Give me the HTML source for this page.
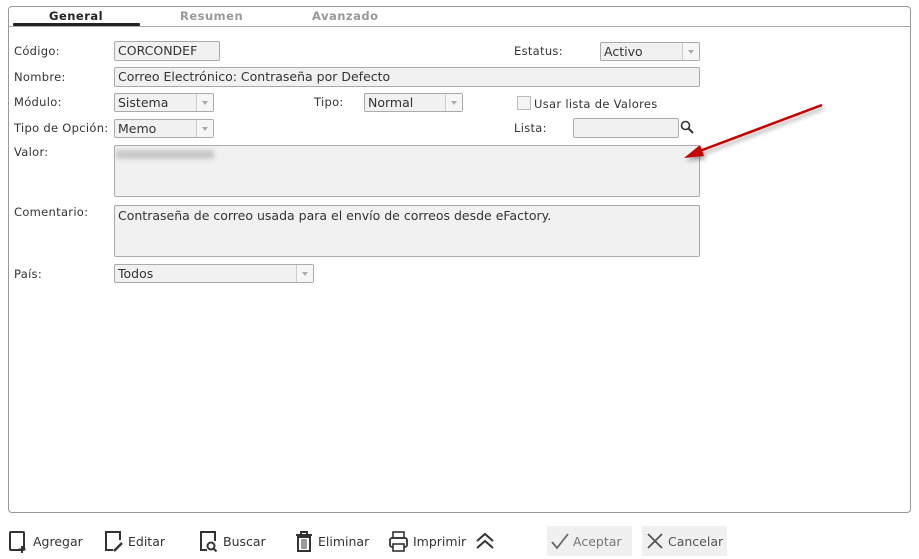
<!DOCTYPE html>
<html><head><meta charset="utf-8"><style>
body{margin:0;width:919px;height:559px;background:#fff;font-family:"DejaVu Sans",Verdana,sans-serif;font-size:12px;color:#333;position:relative;overflow:hidden}
.a{position:absolute}
.panel{left:8px;top:6px;width:903px;height:507px;border:1px solid #999;border-radius:4px;box-sizing:border-box}
.tab{top:9px;font-size:11.5px;font-weight:bold;letter-spacing:.5px;color:#999}
.lbl{font-size:11.5px;color:#333;letter-spacing:.3px}
.in{background:#f1f1f1;border:1px solid #aaa;border-radius:2px;box-sizing:border-box;font-size:12.5px;padding-left:3px;line-height:17px;color:#333}
.sel .dd{position:absolute;right:0;top:0;bottom:0;width:16px;border-left:1px solid #ccc;background:#f6f6f6}
.sel .dd:after{content:"";position:absolute;left:5px;top:7px;border:3px solid transparent;border-top:4px solid #aaa}
.btn{top:530px;font-size:12.5px;color:#333}
</style></head><body>
<div class="a panel"></div>
<div class="a" style="left:9px;top:26px;width:901px;height:1px;background:#aaa"></div>
<div class="a tab" style="left:49px;color:#222">General</div>
<div class="a" style="left:13px;top:23px;width:127px;height:3px;background:#222;border-radius:1px"></div>
<div class="a tab" style="left:180px">Resumen</div>
<div class="a tab" style="left:312px">Avanzado</div>

<div class="a lbl" style="left:14px;top:44px">Código:</div>
<div class="a in" style="left:114px;top:41px;width:106px;height:20px">CORCONDEF</div>
<div class="a lbl" style="left:514px;top:44px">Estatus:</div>
<div class="a in sel" style="left:600px;top:42px;width:100px;height:19px">Activo<span class="dd"></span></div>

<div class="a lbl" style="left:14px;top:70px">Nombre:</div>
<div class="a in" style="left:114px;top:67px;width:586px;height:20px">Correo Electrónico: Contraseña por Defecto</div>

<div class="a lbl" style="left:14px;top:95px">Módulo:</div>
<div class="a in sel" style="left:114px;top:93px;width:100px;height:19px">Sistema<span class="dd"></span></div>
<div class="a lbl" style="left:314px;top:95px">Tipo:</div>
<div class="a in sel" style="left:364px;top:93px;width:99px;height:19px">Normal<span class="dd"></span></div>
<div class="a" style="left:517px;top:96px;width:12px;height:12px;border:1px solid #bbb;background:#f4f4f4"></div>
<div class="a lbl" style="left:534px;top:97px">Usar lista de Valores</div>

<div class="a lbl" style="left:14px;top:121px">Tipo de Opción:</div>
<div class="a in sel" style="left:114px;top:119px;width:100px;height:19px">Memo<span class="dd"></span></div>
<div class="a lbl" style="left:514px;top:121px">Lista:</div>
<div class="a in" style="left:573px;top:118px;width:106px;height:20px"></div>
<svg class="a" style="left:680px;top:120px" width="14" height="14"><circle cx="5.5" cy="5.5" r="4" fill="none" stroke="#333" stroke-width="1.6"/><path d="M8.5 8.5L13 13" stroke="#333" stroke-width="2"/></svg>

<div class="a lbl" style="left:14px;top:145px">Valor:</div>
<div class="a in" style="left:114px;top:145px;width:586px;height:52px"></div>
<div class="a" style="left:116px;top:150px;width:98px;height:9px;background:#c8c8c8;filter:blur(2px)"></div>

<div class="a lbl" style="left:14px;top:205px">Comentario:</div>
<div class="a in" style="left:114px;top:205px;width:586px;height:52px;padding-top:1px">Contraseña de correo usada para el envío de correos desde eFactory.</div>

<div class="a lbl" style="left:14px;top:267px">País:</div>
<div class="a in sel" style="left:114px;top:264px;width:200px;height:19px">Todos<span class="dd"></span></div>

<svg class="a" style="left:0;top:0;filter:drop-shadow(2px 3px 2px rgba(0,0,0,.35))" width="919" height="559">
<path d="M822 105 L697 152" stroke="#c40000" stroke-width="2.5"/>
<path d="M684 158 L700 145 L704 156 Z" fill="#c40000"/>
</svg>

<svg class="a" style="left:8px;top:530px" width="22" height="24"><rect x="2" y="2" width="14" height="18" rx="1" fill="none" stroke="#333" stroke-width="2"/><path d="M14 16v7M10.5 19.5h7" stroke="#333" stroke-width="2"/></svg>
<div class="a btn" style="left:33px;top:534px">Agregar</div>
<svg class="a" style="left:103px;top:530px" width="22" height="24"><path d="M10 20H3V2h14v8" fill="none" stroke="#333" stroke-width="2"/><path d="M11 21l8-8" stroke="#333" stroke-width="2.5"/></svg>
<div class="a btn" style="left:128px;top:534px">Editar</div>
<svg class="a" style="left:198px;top:530px" width="22" height="24"><path d="M9 20H3V2h14v9" fill="none" stroke="#333" stroke-width="2"/><circle cx="13" cy="16" r="3.5" fill="none" stroke="#333" stroke-width="2"/><path d="M15.5 18.5l3 3" stroke="#333" stroke-width="2"/></svg>
<div class="a btn" style="left:223px;top:534px">Buscar</div>
<svg class="a" style="left:294px;top:530px" width="20" height="24"><path d="M2 5h16M7 5V2h6v3" fill="none" stroke="#333" stroke-width="2"/><rect x="4" y="7" width="12" height="14" fill="none" stroke="#333" stroke-width="2"/><path d="M8 9v10M10 9v10M12 9v10" stroke="#333"/></svg>
<div class="a btn" style="left:318px;top:534px">Eliminar</div>
<svg class="a" style="left:388px;top:530px" width="22" height="24"><rect x="5" y="2" width="11" height="6" fill="none" stroke="#333" stroke-width="1.6"/><rect x="2" y="8" width="17" height="9" rx="2" fill="none" stroke="#333" stroke-width="1.8"/><rect x="5" y="14" width="11" height="7" fill="#fff" stroke="#333" stroke-width="1.6"/></svg>
<div class="a btn" style="left:413px;top:534px">Imprimir</div>
<svg class="a" style="left:475px;top:531px" width="20" height="20"><path d="M2 10l8-7 8 7M2 17l8-7 8 7" fill="none" stroke="#333" stroke-width="2"/></svg>

<div class="a" style="left:547px;top:526px;width:85px;height:30px;background:#f0f0f0"></div>
<svg class="a" style="left:551px;top:532px" width="18" height="18"><path d="M1 10l5 6L17 2" fill="none" stroke="#666" stroke-width="1.8"/></svg>
<div class="a btn" style="left:573px;top:534px;color:#777">Aceptar</div>
<div class="a" style="left:642px;top:526px;width:85px;height:30px;background:#f0f0f0"></div>
<svg class="a" style="left:646px;top:532px" width="18" height="18"><path d="M2 2l14 14M16 2L2 16" stroke="#555" stroke-width="1.8"/></svg>
<div class="a btn" style="left:668px;top:534px;color:#555">Cancelar</div>
</body></html>
